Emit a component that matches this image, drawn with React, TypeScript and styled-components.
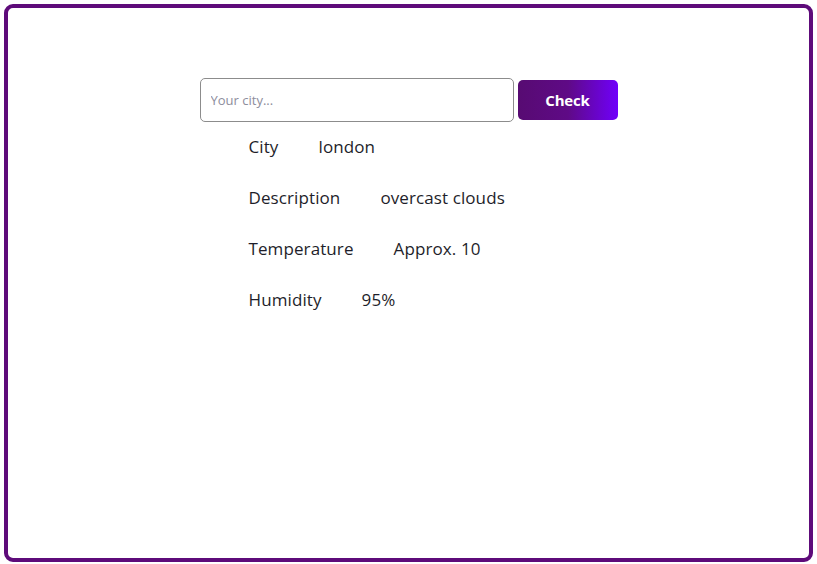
import React from "react";
import styled, { createGlobalStyle } from "styled-components";

const Global = createGlobalStyle`
  html, body { margin: 0; padding: 0; background: #fff; }
  body { font-family: "Open Sans", "Liberation Sans", sans-serif; }
`;

const Frame = styled.div`
  box-sizing: border-box;
  margin: 4px;
  height: 558px;
  border: 4px solid #5e0b7a;
  border-radius: 9px;
  padding-top: 70px;
  display: flex;
  flex-direction: column;
  align-items: center;
`;

const Panel = styled.div`
  width: 418px;
  display: flex;
  flex-direction: column;
`;

const SearchBar = styled.form`
  display: flex;
  align-items: center;
  gap: 4px;
  margin: 0;
`;

const CityInput = styled.input`
  box-sizing: border-box;
  width: 314px;
  height: 44px;
  border: 1px solid #8c8c8c;
  border-radius: 5px;
  padding: 0 10px;
  font-family: "Open Sans", sans-serif;
  font-size: 13px;
  color: #333;
  outline: none;
  &::placeholder { color: #8d8d9c; }
`;

const CheckButton = styled.button`
  box-sizing: border-box;
  width: 100px;
  height: 40px;
  border: none;
  border-radius: 5px;
  background: linear-gradient(90deg, #570b72 0%, #5f0a86 50%, #7000fb 100%);
  color: #fff;
  font-family: "Open Sans", sans-serif;
  font-weight: 700;
  font-size: 15px;
  letter-spacing: -0.2px;
  cursor: pointer;
`;

const Rows = styled.div`
  padding: 14px 0 0 49px;
  display: flex;
  flex-direction: column;
  gap: 31px;
`;

const Row = styled.div`
  display: flex;
  gap: 40px;
  height: 20px;
  align-items: center;
  font-size: 17px;
  letter-spacing: 0.1px;
  color: #1e1e2a;
`;

const Label = styled.span``;
const Value = styled.span``;

const data = [
  ["City", "london"],
  ["Description", "overcast clouds"],
  ["Temperature", "Approx. 10"],
  ["Humidity", "95%"],
];

export default function App() {
  return (
    <>
      <Global />
      <Frame>
        <Panel>
          <SearchBar onSubmit={(e) => e.preventDefault()}>
            <CityInput placeholder="Your city..." />
            <CheckButton type="submit">Check</CheckButton>
          </SearchBar>
          <Rows>
            {data.map(([l, v]) => (
              <Row key={l}>
                <Label>{l}</Label>
                <Value>{v}</Value>
              </Row>
            ))}
          </Rows>
        </Panel>
      </Frame>
    </>
  );
}
